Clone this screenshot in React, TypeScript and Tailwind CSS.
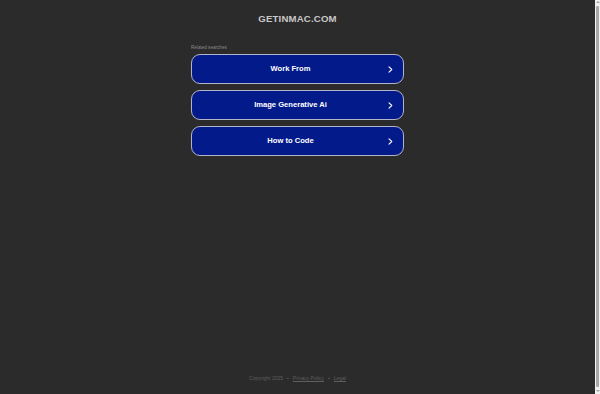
import React from "react";

const searches = ["Work From", "Image Generative Ai", "How to Code"];

function Chevron() {
  return (
    <svg width="5" height="7" viewBox="0 0 5 7" fill="none">
      <path d="M1 0.8 L3.8 3.5 L1 6.2" stroke="#ffffff" strokeWidth="1.1" strokeLinecap="round" strokeLinejoin="round" />
    </svg>
  );
}

export default function App() {
  return (
    <div className="flex h-[394px] w-[600px] overflow-hidden bg-[#2b2b2b] font-['Liberation_Sans',Arial,sans-serif]">
      <div className="flex flex-1 flex-col items-center">
        <h1 className="mt-[13px] text-[9.6px] font-bold leading-[12px] tracking-[0.02em] text-[#c8c8c8]">GETINMAC.COM</h1>

        <div className="mt-[20px] w-[213px]">
          <div className="mb-[3px] text-[4.6px] leading-[6px] text-[#8a8a8a]">Related searches</div>
          <div className="flex flex-col gap-[6px]">
            {searches.map((s, key) => (
              <a
                key={key}
                href="#"
                className="flex h-[30px] items-center rounded-[9px] border border-[#b4b4c8] bg-[#021a8a] px-[10px]"
              >
                <span className="flex-1 text-center text-[7.6px] font-bold text-white">{s}</span>
                <span className="flex w-[14px] justify-end">
                  <Chevron />
                </span>
              </a>
            ))}
          </div>
        </div>

        <div className="mt-auto mb-[12px] flex items-center gap-[4px] text-[5px] leading-[7px] text-[#5e5e5e]">
          <span>Copyright 2025</span>
          <span>•</span>
          <a href="#" className="underline">Privacy Policy</a>
          <span>•</span>
          <a href="#" className="underline">Legal</a>
        </div>
      </div>

      {/* scrollbar */}
      <div className="flex w-[5px] flex-col items-center bg-[#f1f1f1]">
        <div className="mt-[1px] h-0 w-0 border-x-[2px] border-b-[2px] border-x-transparent border-b-[#a3a3a3]" />
        <div className="mt-[3px] w-[3px] flex-1 rounded-[1px] bg-[#a8a8a8]" />
        <div className="mt-[3px] mb-[2px] h-0 w-0 border-x-[2px] border-t-[2px] border-x-transparent border-t-[#a3a3a3]" />
      </div>
    </div>
  );
}
